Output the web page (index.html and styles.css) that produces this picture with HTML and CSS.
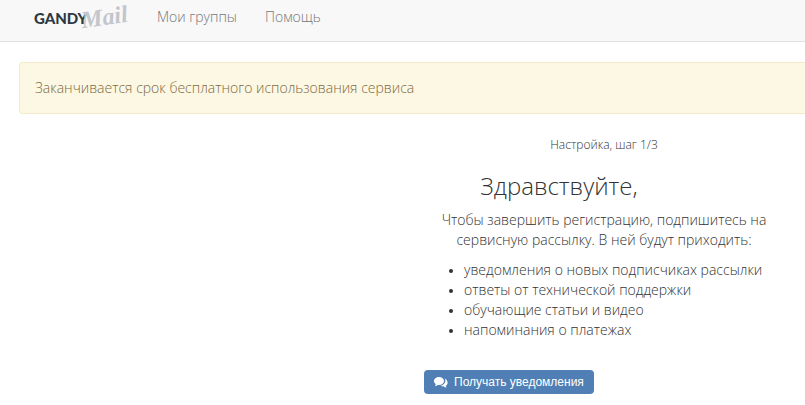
FILE: index.html
```html
<!DOCTYPE html>
<html lang="ru">
<head>
<meta charset="utf-8">
<meta name="viewport" content="width=device-width, initial-scale=1">
<title>GandyMail</title>
<link rel="stylesheet" href="styles.css">
</head>
<body>
<header class="navbar">
  <a class="logo" href="#"><span class="logo-main">GANDY</span><span class="logo-script">Mail</span></a>
  <nav class="menu">
    <a href="#">Мои группы</a>
    <a href="#">Помощь</a>
  </nav>
</header>
<div class="alert" role="alert">Заканчивается срок бесплатного использования сервиса</div>
<main class="setup">
  <p class="step">Настройка, шаг 1/3</p>
  <h1 class="title">Здравствуйте,</h1>
  <p class="intro">Чтобы завершить регистрацию, подпишитесь на<br>сервисную рассылку. В ней будут приходить:</p>
  <ul class="topics">
    <li>уведомления о новых подписчиках рассылки</li>
    <li>ответы от технической поддержки</li>
    <li>обучающие статьи и видео</li>
    <li>напоминания о платежах</li>
  </ul>
  <button class="subscribe" type="button">
    <svg class="icon" viewBox="0 0 14 12" aria-hidden="true">
      <path d="M5 1C2.200 1 0 2.800 0 5c0 1.200.7 2.300 1.800 3L1 10c1.200-.1 2.100-.6 2.800-1.100L5 9c2.900 0 5-1.800 5-4S7.900 1 5 1z"/>
      <path d="M10.800 2.400c.5.800.7 1.700.6 2.700-.2 2.300-2 4.100-4.600 4.700.7.400 1.600.6 2.500.5 1 .8 2 1.200 3.200 1.200l-.8-1.700c1.200-.7 1.900-1.700 1.900-3 0-1.900-1.100-3.500-2.800-4.400z"/>
    </svg>
    Получать уведомления
  </button>
</main>
</body>
</html>
```
FILE: styles.css
```css
* { box-sizing: border-box; }

body {
  margin: 0;
  background: #fff;
  color: #333;
  font: 300 14px/20px "Open Sans", "Noto Sans", sans-serif;
}

.navbar {
  display: flex;
  align-items: center;
  height: 42px;
  padding: 0 34px 8px;
  background: #f8f8f8;
  border-bottom: 1px solid #e0e0e0;
}

.navbar a { text-decoration: none; }

.logo {
  display: flex;
  align-items: center;
  width: 123px;
}

.logo-main {
  color: #2d3a45;
  font: 900 15px/20px Lato, sans-serif;
  padding-top: 2px;
}

.logo-script {
  color: #c3c6cc;
  font: italic 700 24px/24px "Liberation Serif", serif;
  margin-left: -6px;
  transform: rotate(-8deg);
}

.menu {
  display: flex;
  gap: 28px;
}

.menu a { color: #777; }

.alert {
  margin: 20px 0 0 19px;
  padding: 15px;
  border: 1px solid #f3eacb;
  border-right: 0;
  border-radius: 4px 0 0 4px;
  background: #fcf8e3;
  color: #7d6a42;
}

.setup {
  margin-left: 424px;
  max-width: 360px;
  padding-top: 21px;
}

.step {
  margin: 0;
  font-size: 12px;
  text-align: center;
}

.title {
  margin: 18px 0 11px;
  padding-right: 90px;
  font-size: 24px;
  font-weight: 300;
  line-height: 26px;
  text-align: center;
}

.intro {
  margin: 0;
  text-align: center;
}

.topics {
  margin: 10px 0 30px;
  padding-left: 40px;
}

.topics li::marker { font-size: 12px; }

.subscribe {
  display: inline-flex;
  align-items: center;
  gap: 6px;
  padding: 3px 10px;
  border: 0;
  border-radius: 4px;
  background: #4f7fb5;
  color: #fff;
  font: 12px/18px "Liberation Sans", sans-serif;
}

.icon {
  width: 14px;
  height: 12px;
  fill: #fff;
}
```
